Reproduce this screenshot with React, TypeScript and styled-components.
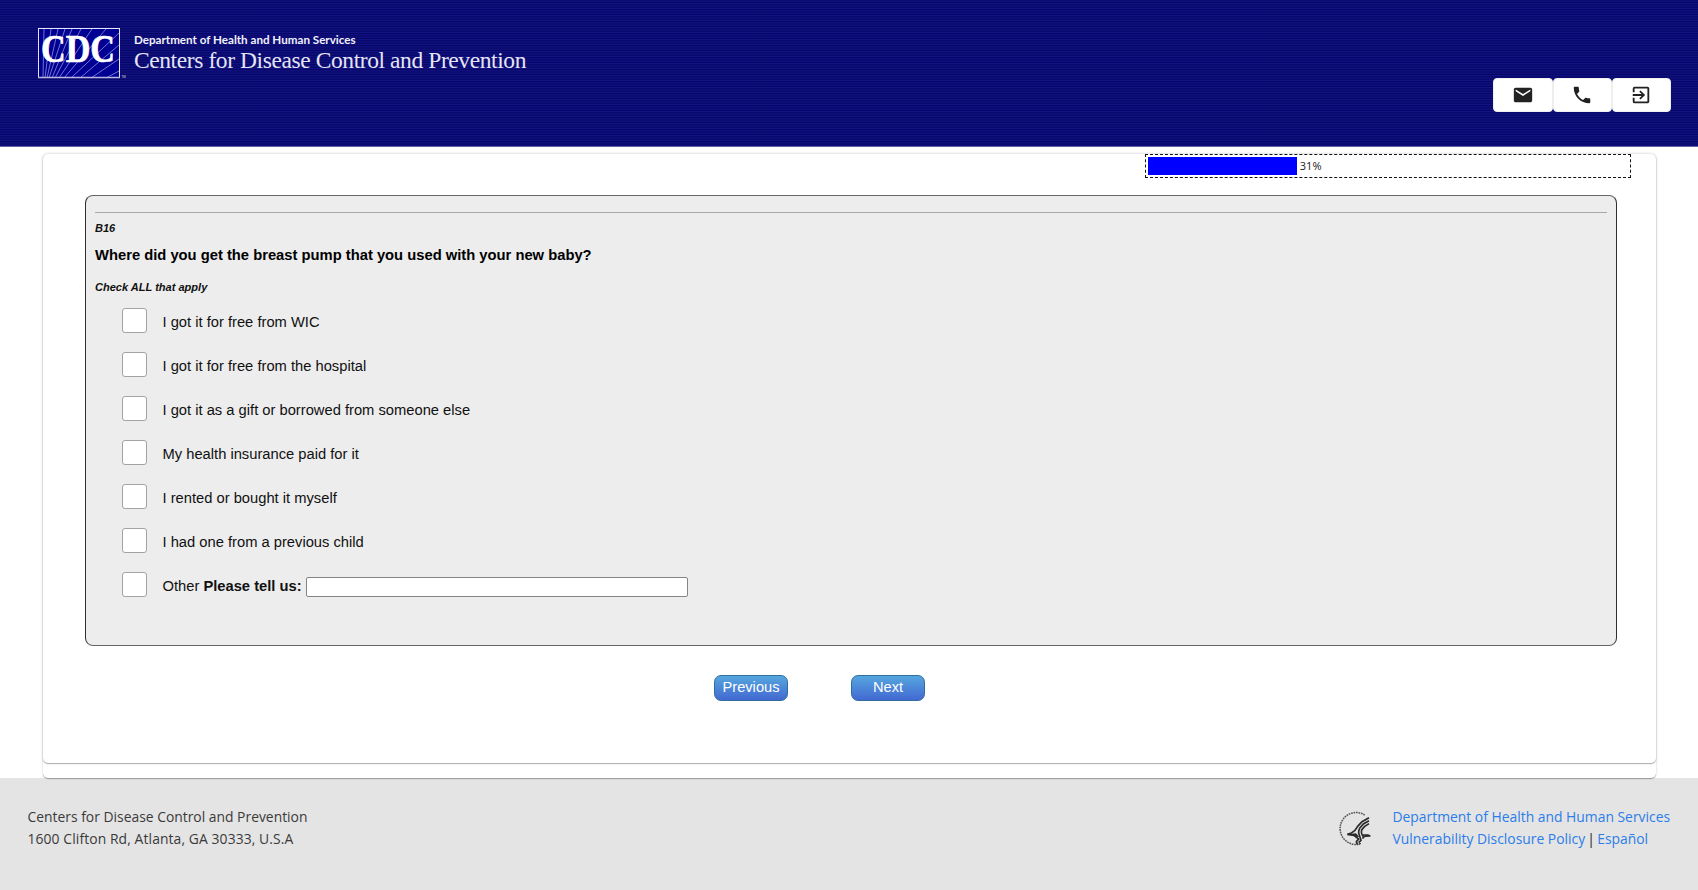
import React from 'react';
import styled, { createGlobalStyle } from 'styled-components';
import { MdEmail, MdPhone, MdExitToApp } from 'react-icons/md';

const GlobalStyle = createGlobalStyle`
  *, *::before, *::after { box-sizing: border-box; }
  html, body { margin: 0; padding: 0; height: 100%; overflow: hidden; }
  body { background: #fff; color: #111; font-family: "Liberation Sans", Arial, sans-serif; }
  #root { height: 100%; }
`;

const Page = styled.div`
  display: flex;
  flex-direction: column;
  height: 890px;
`;

const Header = styled.header`
  display: flex;
  justify-content: space-between;
  flex: none;
  height: 147px;
  padding: 28px 27px 0 38px;
  border-bottom: 1px solid #62629f;
  background: repeating-linear-gradient(to bottom, #040464 0, #141484 1.2px, #040464 2.4px);
`;

const Brand = styled.div`
  display: flex;
  align-items: flex-start;
  gap: 7px;
  color: #fff;
`;

const LogoSvg = styled.svg`
  display: block;
  width: 89px;
  height: 52px;
  overflow: visible;
`;

const BrandText = styled.div`
  display: flex;
  flex-direction: column;
  white-space: nowrap;
  padding-top: 5px;
`;

const Department = styled.span`
  font: bold 11.63px/14px Lato, sans-serif;
  color: #f0f0fa;
`;

const Agency = styled.span`
  font: 23.5px/26px "Liberation Serif", serif;
  letter-spacing: -0.41px;
  color: #e4e4f6;
`;

const Tools = styled.nav`
  display: flex;
  height: 34px;
  margin-top: 50px;
`;

const ToolButton = styled.button`
  display: flex;
  align-items: center;
  justify-content: center;
  width: 59.2px;
  height: 34px;
  padding: 0;
  border: 1px solid #eee;
  border-radius: 4px;
  background: #fff;
  color: #222;
  font-size: 22px;
`;

const Outer = styled.main`
  flex: none;
  position: relative;
  height: 624px;
  margin: 7px 42.5px 0;
  border-radius: 5px;
  background: #fff;
  box-shadow: 0 1px 1px rgba(0, 0, 0, 0.3), 0 0 3px rgba(0, 0, 0, 0.12);
`;

const Card = styled.section`
  display: flex;
  flex-direction: column;
  height: 609px;
  padding: 0 24.5px 0 42.5px;
  border-radius: 5px;
  box-shadow: 0 1px 1px rgba(0, 0, 0, 0.3), 0 0 3px rgba(0, 0, 0, 0.12);
`;

const Progress = styled.div`
  display: flex;
  align-items: center;
  align-self: flex-end;
  gap: 3px;
  width: 486px;
  height: 24px;
  padding: 2px;
  border: 1px dashed #111;
  font: 11px/16px "Open Sans", sans-serif;
  color: #222;
`;

const ProgressFill = styled.div`
  height: 18px;
  background: #00f;
`;

const Panel = styled.div`
  height: 451px;
  width: 1532px;
  margin-top: 17px;
  padding: 16px 9px 0;
  border: 1px solid #2f2f2f;
  border-top-color: #666;
  border-bottom-color: #666;
  border-radius: 8px;
  background: #ededed;
`;

const Rule = styled.hr`
  height: 1px;
  margin: 0;
  border: 0;
  background: #a8a8a8;
`;

const Note = styled.div<{ $top: number }>`
  margin-top: ${(p) => p.$top}px;
  font: italic bold 11.05px/14px "Liberation Sans", sans-serif;
`;

const Question = styled.h1`
  margin: 10px 0 0;
  font: bold 14.75px/20px "Liberation Sans", sans-serif;
  color: #000;
`;

const Options = styled.div`
  display: flex;
  flex-direction: column;
  gap: 19px;
  margin: 14px 0 0 26.5px;
`;

const Option = styled.label`
  display: flex;
  align-items: center;
  height: 25px;
  font-size: 14.73px;
  line-height: 20px;
  white-space: pre;
`;

const Checkbox = styled.input.attrs({ type: 'checkbox' })`
  appearance: none;
  width: 25px;
  height: 25px;
  margin: 0 16px 0 0;
  border: 1px solid #a3a3a3;
  border-radius: 3px;
  background: #fff;
`;

const OptionText = styled.span`
  padding-top: 2px;
`;

const OtherInput = styled.input.attrs({ type: 'text' })`
  width: 382px;
  height: 20px;
  margin: 4px 0 0 4px;
  border: 1px solid #858585;
  border-radius: 2px;
  background: #fff;
`;

const Actions = styled.div`
  display: flex;
  gap: 63px;
  margin: 29px 0 0 629px;
`;

const ActionButton = styled.button`
  width: 74px;
  height: 26px;
  padding: 0 0 2px;
  border: 1px solid #2f6f9f;
  border-radius: 7px;
  background: linear-gradient(#55a6de, #4368d2);
  color: #fff;
  font: 14.67px/20px "Liberation Sans", sans-serif;
`;

const Footer = styled.footer`
  display: flex;
  justify-content: space-between;
  flex: 1;
  padding: 28px 27.5px 0 27.5px;
  background: #e4e4e4;
  font: 13.88px/22px "Open Sans", sans-serif;
  color: #3a3a3a;
  white-space: nowrap;
`;

const Address = styled.div``;

const Street = styled.span`
  letter-spacing: 0.1px;
`;

const Links = styled.div`
  display: flex;
  gap: 18px;
`;

const Seal = styled.svg`
  display: block;
  width: 37px;
  height: 37px;
  margin: 5px 2px 0 0;
`;

const Link = styled.a`
  color: #2b7de9;
  text-decoration: none;
`;

const Separator = styled.span`
  margin: 0 -1.4px;
  color: #222;
`;

const LinkList = styled.div`
  width: 278px;
`;

const RAYS = [
  'M5 50 L6 1', 'M7 50 L13 1', 'M9 50 L20 1', 'M11 50 L27 1', 'M14 50 L34 1', 'M17 50 L43 1',
  'M21 50 L54 1', 'M26 50 L68 1', 'M33 50 L81 5', 'M42 50 L81 17', 'M53 50 L81 31', 'M68 50 L81 43',
];

function CdcLogo() {
  return (
    <LogoSvg viewBox="0 0 89 52">
      <rect x="0.5" y="0.5" width="81" height="49" fill="#000094" stroke="#e4e4f4" />
      {RAYS.map((d) => (
        <path key={d} d={d} stroke="#8f8fd6" strokeWidth="0.8" />
      ))}
      <path d="M0 49.5H82" stroke="#b5b5dd" strokeWidth="1.6" />
      <text
        x="3" y="34" textLength="74" lengthAdjust="spacingAndGlyphs"
        fontFamily="Liberation Serif, serif" fontWeight="700" fontSize="41"
        fill="#fff" stroke="#fff" strokeWidth="0.7"
      >CDC</text>
      <text x="83.5" y="50" fontFamily="Liberation Sans, sans-serif" fontSize="3" fill="#ddd">TM</text>
    </LogoSvg>
  );
}

function HhsSeal() {
  return (
    <Seal viewBox="20 34 111 111" fill="none" stroke="#2a2a2a">
      <path d="M106 46 A48 48 0 1 0 88 134" stroke="#555" strokeWidth="4.6" strokeDasharray="5 2.4" />
      <path d="M119 54 L98 66 L85 80 Q78 94 66 100 L54 104 L74 107 L88 118 L81 126 L84 134" strokeWidth="5" />
      <path d="M119 63 L102 73 L91 86 Q85 97 91 109 L95 122 L88 129" strokeWidth="5" />
      <path d="M119 72 L105 81 L97 91 Q94 103 103 111 L100 117" strokeWidth="5" />
      <path d="M101 106 L116 106 L123 109 L108 110 L100 113 M88 134 L94 131" strokeWidth="4" />
      <path d="M59 103 L80 101 L90 112 L78 111Z" fill="#2a2a2a" stroke="none" />
    </Seal>
  );
}

const OPTIONS = [
  'I got it for free from WIC',
  'I got it for free from the hospital',
  'I got it as a gift or borrowed from someone else',
  'My health insurance paid for it',
  'I rented or bought it myself',
  'I had one from a previous child',
];

export default function App() {
  const percent = 31;
  return (
    <Page>
      <GlobalStyle />
      <Header>
        <Brand>
          <CdcLogo />
          <BrandText>
            <Department>Department of Health and Human Services</Department>
            <Agency>Centers for Disease Control and Prevention</Agency>
          </BrandText>
        </Brand>
        <Tools>
          <ToolButton aria-label="Email"><MdEmail /></ToolButton>
          <ToolButton aria-label="Phone"><MdPhone /></ToolButton>
          <ToolButton aria-label="Exit"><MdExitToApp /></ToolButton>
        </Tools>
      </Header>
      <Outer>
        <Card>
          <Progress>
            <ProgressFill style={{ width: `${percent}%` }} />
            {percent}%
          </Progress>
          <Panel>
            <Rule />
            <Note $top={8}>B16</Note>
            <Question>Where did you get the breast pump that you used with your new baby?</Question>
            <Note $top={15}>Check ALL that apply</Note>
            <Options>
              {OPTIONS.map((text) => (
                <Option key={text}>
                  <Checkbox />
                  <OptionText>{text}</OptionText>
                </Option>
              ))}
              <Option>
                <Checkbox />
                <OptionText>Other <b>Please tell us:</b></OptionText>
                <OtherInput />
              </Option>
            </Options>
          </Panel>
          <Actions>
            <ActionButton>Previous</ActionButton>
            <ActionButton>Next</ActionButton>
          </Actions>
        </Card>
      </Outer>
      <Footer>
        <Address>
          Centers for Disease Control and Prevention<br />
          <Street>1600 Clifton Rd, Atlanta, GA 30333, U.S.A</Street>
        </Address>
        <Links>
          <HhsSeal />
          <LinkList>
            <Link>Department of Health and Human Services</Link><br />
            <Link>Vulnerability Disclosure Policy</Link> <Separator>|</Separator> <Link>Español</Link>
          </LinkList>
        </Links>
      </Footer>
    </Page>
  );
}
